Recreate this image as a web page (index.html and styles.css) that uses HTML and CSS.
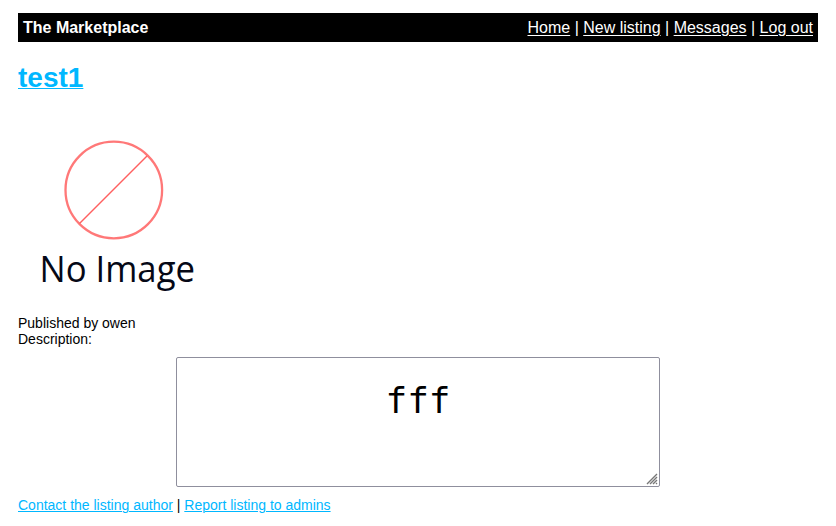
FILE: index.html
```html
<!DOCTYPE html>
<html lang="en">
<head>
<meta charset="utf-8">
<title>The Marketplace</title>
<link rel="stylesheet" href="styles.css">
</head>
<body>
<header class="topbar">
  <strong>The Marketplace</strong>
  <nav><a href="#">Home</a> | <a href="#">New listing</a> | <a href="#">Messages</a> | <a href="#">Log out</a></nav>
</header>
<main>
  <h1 class="title"><a href="#">test1</a></h1>
  <svg class="picture" width="200" height="200" viewBox="0 0 200 200">
    <circle cx="95.8" cy="75" r="48.3" fill="none" stroke="#ff7878" stroke-width="2.3"/>
    <path d="M61.5 108.5 129 41" stroke="#ff6060" stroke-width="1.5"/>
    <text class="picture-text" x="21.5" y="167" textLength="155.5" lengthAdjust="spacingAndGlyphs">No Image</text>
  </svg>
  <p class="meta">Published by owen<br>Description:</p>
  <div class="field">
    <textarea class="description" readonly>fff</textarea>
    <svg class="grip" width="12" height="12" viewBox="0 0 12 12">
      <path d="M1 11 11 1M4 11 11 4M7 11 11 7M10 11 11 10"/>
    </svg>
  </div>
  <p class="actions"><a href="#">Contact the listing author</a> | <a href="#">Report listing to admins</a></p>
</main>
</body>
</html>
```
FILE: styles.css
```css
body {
  margin: 13px 18px 0;
  background: #fff;
  color: #000;
  font: 14px/16px "Liberation Sans", Arial, sans-serif;
  overflow: hidden;
}
.topbar {
  display: flex;
  justify-content: space-between;
  align-items: center;
  height: 29px;
  padding: 0 5px;
  background: #000;
  color: #fff;
  font-size: 16px;
  line-height: 18px;
}
a {
  color: #00b7ff;
  text-decoration-thickness: 1px;
}
.topbar a {
  color: #fff;
  text-underline-offset: 2px;
}
.title {
  margin: 19px 0 21px;
  font-size: 28px;
  line-height: 33px;
}
.title a { text-underline-offset: 1px; }
.picture { display: block; }
.picture-text {
  font: 36.8px "Open Sans", sans-serif;
  fill: #050816;
}
.meta { margin: 0; }
.field {
  position: relative;
  width: 484px;
  margin: 10px auto;
}
.description {
  display: block;
  box-sizing: border-box;
  width: 484px;
  height: 130px;
  padding: 22px 2px 20px;
  border: 1px solid #8f8f9d;
  border-radius: 2px;
  background: #fff;
  color: #000;
  font: 36px "DejaVu Sans Mono", monospace;
  text-align: center;
  resize: none;
  outline: none;
}
.grip {
  position: absolute;
  right: 2px;
  bottom: 2px;
  stroke: #777;
  stroke-width: 1.4;
}
.actions { margin: 0; }
```
